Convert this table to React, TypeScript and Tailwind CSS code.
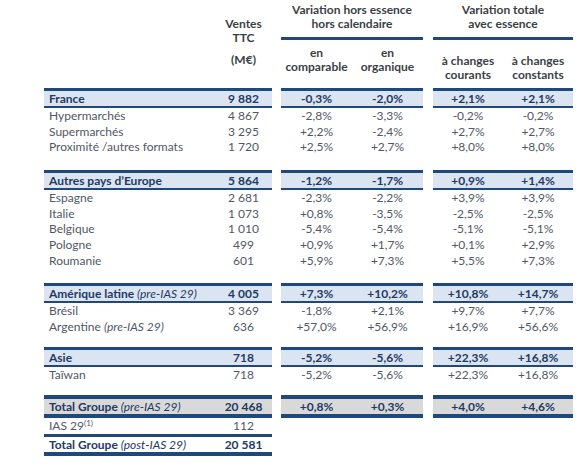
import React from 'react';

type Row = {
  label: React.ReactNode;
  sales: string;
  vals?: [string, string, string, string];
};

type Section = {
  head: Row;
  rows: Row[];
  gap: string;
};

const navy = 'text-[#1f3a63]';
const grey = 'text-[#505866]';

const sections: Section[] = [
  {
    gap: 'mt-0',
    head: { label: 'France', sales: '9 882', vals: ['-0,3%', '-2,0%', '+2,1%', '+2,1%'] },
    rows: [
      { label: 'Hypermarchés', sales: '4 867', vals: ['-2,8%', '-3,3%', '-0,2%', '-0,2%'] },
      { label: 'Supermarchés', sales: '3 295', vals: ['+2,2%', '-2,4%', '+2,7%', '+2,7%'] },
      { label: 'Proximité /autres formats', sales: '1 720', vals: ['+2,5%', '+2,7%', '+8,0%', '+8,0%'] },
    ],
  },
  {
    gap: 'mt-[14.75px]',
    head: { label: 'Autres pays d’Europe', sales: '5 864', vals: ['-1,2%', '-1,7%', '+0,9%', '+1,4%'] },
    rows: [
      { label: 'Espagne', sales: '2 681', vals: ['-2,3%', '-2,2%', '+3,9%', '+3,9%'] },
      { label: 'Italie', sales: '1 073', vals: ['+0,8%', '-3,5%', '-2,5%', '-2,5%'] },
      { label: 'Belgique', sales: '1 010', vals: ['-5,4%', '-5,4%', '-5,1%', '-5,1%'] },
      { label: 'Pologne', sales: '499', vals: ['+0,9%', '+1,7%', '+0,1%', '+2,9%'] },
      { label: 'Roumanie', sales: '601', vals: ['+5,9%', '+7,3%', '+5,5%', '+7,3%'] },
    ],
  },
  {
    gap: 'mt-[14.25px]',
    head: {
      label: (
        <>
          Amérique latine <span className="font-normal italic">(pre-IAS 29)</span>
        </>
      ),
      sales: '4 005',
      vals: ['+7,3%', '+10,2%', '+10,8%', '+14,7%'],
    },
    rows: [
      { label: 'Brésil', sales: '3 369', vals: ['-1,8%', '+2,1%', '+9,7%', '+7,7%'] },
      {
        label: (
          <>
            Argentine <span className="italic">(pre-IAS 29)</span>
          </>
        ),
        sales: '636',
        vals: ['+57,0%', '+56,9%', '+16,9%', '+56,6%'],
      },
    ],
  },
  {
    gap: 'mt-[12.5px]',
    head: { label: 'Asie', sales: '718', vals: ['-5,2%', '-5,6%', '+22,3%', '+16,8%'] },
    rows: [{ label: 'Taïwan', sales: '718', vals: ['-5,2%', '-5,6%', '+22,3%', '+16,8%'] }],
  },
];

const Cells = ({ row, boxClass, bold }: { row: Row; boxClass: string; bold?: boolean }) => {
  const color = bold ? navy : grey;
  return (
    <div className="flex">
      <div className={`ml-[44px] flex w-[228px] items-center ${boxClass} ${color} ${bold ? 'font-bold' : ''}`}>
        <div className="flex-1 pl-[5px] whitespace-nowrap">{row.label}</div>
        <div className="w-[57px] text-center">{row.sales}</div>
      </div>
      {row.vals && (
        <>
          <div className={`ml-[9px] grid w-[142px] grid-cols-2 items-center text-center ${boxClass} ${color} ${bold ? 'font-bold' : ''}`}>
            <div>{row.vals[0]}</div>
            <div>{row.vals[1]}</div>
          </div>
          <div className={`ml-[10px] grid w-[140px] grid-cols-2 items-center text-center ${boxClass} ${color} ${bold ? 'font-bold' : ''}`}>
            <div>{row.vals[2]}</div>
            <div>{row.vals[3]}</div>
          </div>
        </>
      )}
    </div>
  );
};

const headBox = 'h-[20px] border-t-[3px] border-b-[2px] border-[#1f497d] bg-[#dbe5f1]';
const rowBox = 'h-[15.75px]';

export default function App() {
  return (
    <div
      className="h-[467px] w-[584px] overflow-hidden bg-white text-[12px] leading-[14px]"
      style={{ fontFamily: 'Lato, "Liberation Sans", sans-serif' }}
    >
      {/* column headers */}
      <div className="flex h-[88px] font-bold text-[#3b3f46]">
        <div className="ml-[44px] flex w-[228px] justify-end">
          <div className="w-[57px] pt-[17px] text-center">
            <div>Ventes</div>
            <div>TTC</div>
            <div className="mt-[8px]">(M€)</div>
          </div>
        </div>
        <div className="ml-[9px] w-[142px]">
          <div className="pt-[3px] text-center">
            <div>Variation hors essence</div>
            <div>hors calendaire</div>
          </div>
          <div className="mt-[6px] h-[3px] bg-[#1f497d]" />
          <div className="mt-[6px] grid grid-cols-2 text-center">
            <div>
              en
              <br />
              comparable
            </div>
            <div>
              en
              <br />
              organique
            </div>
          </div>
        </div>
        <div className="ml-[10px] w-[140px]">
          <div className="pt-[3px] text-center">
            <div>Variation totale</div>
            <div>avec essence</div>
          </div>
          <div className="mt-[6px] h-[3px] bg-[#1f497d]" />
          <div className="mt-[14px] grid grid-cols-2 text-center">
            <div>
              à changes
              <br />
              courants
            </div>
            <div>
              à changes
              <br />
              constants
            </div>
          </div>
        </div>
      </div>

      {sections.map((s, i) => (
        <div key={i} className={s.gap}>
          <Cells row={s.head} boxClass={headBox} bold />
          {s.rows.map((r, j) => (
            <Cells key={j} row={r} boxClass={rowBox} />
          ))}
        </div>
      ))}

      {/* totals */}
      <div className="mt-[12.25px]">
        <Cells
          row={{
            label: (
              <>
                Total Groupe <span className="font-normal italic">(pre-IAS 29)</span>
              </>
            ),
            sales: '20 468',
            vals: ['+0,8%', '+0,3%', '+4,0%', '+4,6%'],
          }}
          boxClass="h-[23px] border-y-4 border-[#1f497d] bg-[#d9d9d9]"
          bold
        />
        <Cells
          row={{
            label: (
              <>
                IAS 29<sup className="text-[8px]">(1)</sup>
              </>
            ),
            sales: '112',
          }}
          boxClass="h-[16px]"
        />
        <Cells
          row={{
            label: (
              <>
                Total Groupe <span className="font-normal italic">(post-IAS 29)</span>
              </>
            ),
            sales: '20 581',
          }}
          boxClass="h-[22px] border-t-[3px] border-b-4 border-[#1f497d]"
          bold
        />
      </div>
    </div>
  );
}
